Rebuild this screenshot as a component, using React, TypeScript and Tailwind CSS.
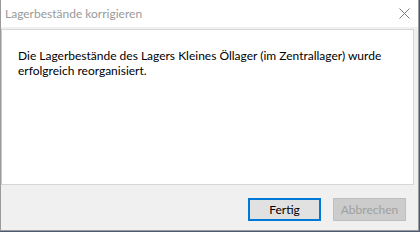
import React from "react";

export default function App() {
  return (
    <div className="w-[420px] h-[232px] bg-[#4b5a74] overflow-hidden" style={{ fontFamily: 'Lato, "Noto Sans", "Liberation Sans", sans-serif' }}>
      <div className="w-[419px] h-[231px] flex flex-col bg-[#f0f0f0] border-l border-r border-b border-[#9a9a9a]">
        <div className="h-[27px] bg-white flex items-center justify-between shrink-0">
          <span className="ml-[4px] text-[12px] text-[#999999] leading-none">Lagerbestände korrigieren</span>
          <svg width="11" height="11" viewBox="0 0 11 11" className="mr-[8px]">
            <path d="M0.5 0.5 L10.5 10.5 M10.5 0.5 L0.5 10.5" stroke="#7a7a7a" strokeWidth="1" />
          </svg>
        </div>
        <div className="mt-[2px] mr-[4px] h-[156px] bg-white border border-[#d6d6d6] border-l-[#c8c8c8] pl-[16px] pt-[18px] shrink-0">
          <p className="text-[12px] leading-[15px] text-black">
            Die Lagerbestände des Lagers Kleines Öllager (im Zentrallager) wurde
            <br />
            erfolgreich reorganisiert.
          </p>
        </div>
        <div className="flex-1 flex items-start justify-end gap-[12px] pr-[12px] pt-[13px]">
          <button className="w-[73px] h-[23px] border-2 border-[#0078d7] bg-[#e1e1e1] text-[12px] text-black flex items-center justify-center leading-none">
            Fertig
          </button>
          <button className="w-[73px] h-[23px] border border-[#bfbfbf] bg-[#cccccc] text-[12px] text-[#a0a0a0] flex items-center justify-center leading-none">
            Abbrechen
          </button>
        </div>
      </div>
    </div>
  );
}
